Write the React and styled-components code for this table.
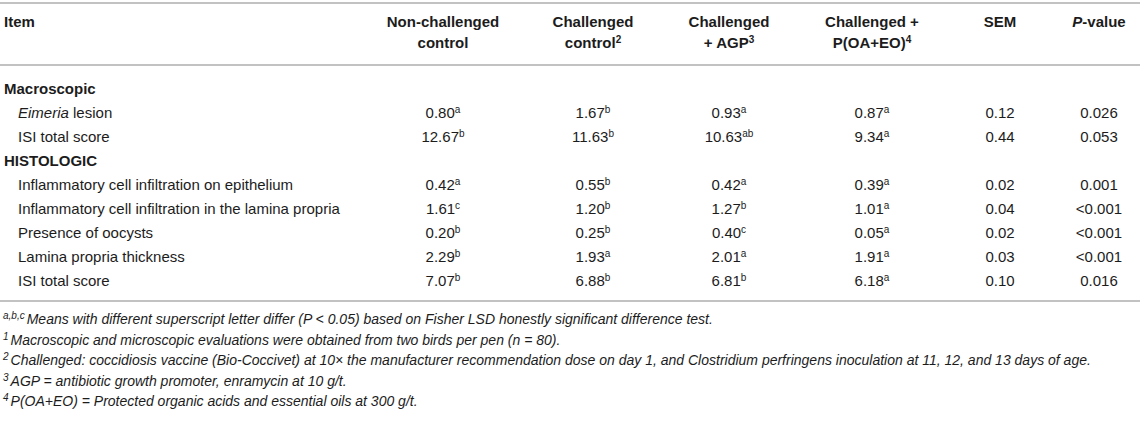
import React from "react";
import styled, { createGlobalStyle } from "styled-components";

const GlobalStyle = createGlobalStyle`
  html, body {
    margin: 0;
    padding: 0;
    background: #ffffff;
  }
  body {
    font-family: "Liberation Sans", Arial, Helvetica, sans-serif;
    color: #1c1c1c;
  }
`;

const Wrapper = styled.div`
  width: 1140px;
  padding-top: 2px;
`;

const Table = styled.table`
  width: 1140px;
  table-layout: fixed;
  border-collapse: collapse;
  font-size: 15px;
`;

const HeadRow = styled.tr`
  border-top: 2px solid #c2c2c2;
  border-bottom: 2px solid #c2c2c2;
`;

const HeadCell = styled.th`
  font-weight: bold;
  line-height: 21px;
  vertical-align: top;
  padding: 7px 4px 11px;
  text-align: ${({ $left }) => ($left ? "left" : "center")};
`;

const Body = styled.tbody`
  border-bottom: 2px solid #c2c2c2;
`;

const Spacer = styled.tr`
  height: ${({ $h }) => $h}px;
`;

const Row = styled.tr`
  height: 24px;
`;

const GroupCell = styled.td`
  font-weight: bold;
  padding: 0 4px;
  line-height: 24px;
`;

const ItemCell = styled.td`
  padding: 0 4px 0 18px;
  line-height: 24px;
  white-space: nowrap;
`;

const ValueCell = styled.td`
  text-align: center;
  padding: 0 4px;
  line-height: 24px;
`;

const Sup = styled.sup`
  font-size: 10px;
  line-height: 0;
  vertical-align: 5px;
`;

const Notes = styled.div`
  padding: 7px 0 0 3px;
  font-size: 14px;
  font-style: italic;
  line-height: 20.5px;
  color: #1c1c1c;
`;

const Note = styled.div`
  white-space: nowrap;
`;

const NoteMark = styled.sup`
  font-size: 10px;
  line-height: 0;
  vertical-align: 5px;
  margin-right: 2px;
`;

const cols = [356, 174, 126, 146, 140, 116, 82];

const groups = [
  {
    title: "Macroscopic",
    rows: [
      {
        label: (
          <>
            <i>Eimeria</i> lesion
          </>
        ),
        vals: [["0.80", "a"], ["1.67", "b"], ["0.93", "a"], ["0.87", "a"]],
        sem: "0.12",
        p: "0.026",
      },
      {
        label: "ISI total score",
        vals: [["12.67", "b"], ["11.63", "b"], ["10.63", "ab"], ["9.34", "a"]],
        sem: "0.44",
        p: "0.053",
      },
    ],
  },
  {
    title: "HISTOLOGIC",
    rows: [
      {
        label: "Inflammatory cell infiltration on epithelium",
        vals: [["0.42", "a"], ["0.55", "b"], ["0.42", "a"], ["0.39", "a"]],
        sem: "0.02",
        p: "0.001",
      },
      {
        label: "Inflammatory cell infiltration in the lamina propria",
        vals: [["1.61", "c"], ["1.20", "b"], ["1.27", "b"], ["1.01", "a"]],
        sem: "0.04",
        p: "<0.001",
      },
      {
        label: "Presence of oocysts",
        vals: [["0.20", "b"], ["0.25", "b"], ["0.40", "c"], ["0.05", "a"]],
        sem: "0.02",
        p: "<0.001",
      },
      {
        label: "Lamina propria thickness",
        vals: [["2.29", "b"], ["1.93", "a"], ["2.01", "a"], ["1.91", "a"]],
        sem: "0.03",
        p: "<0.001",
      },
      {
        label: "ISI total score",
        vals: [["7.07", "b"], ["6.88", "b"], ["6.81", "b"], ["6.18", "a"]],
        sem: "0.10",
        p: "0.016",
      },
    ],
  },
];

const App = () => {
  return (
    <Wrapper>
      <GlobalStyle />
      <Table>
        <colgroup>
          {cols.map((w, i) => (
            <col key={i} style={{ width: w }} />
          ))}
        </colgroup>
        <thead>
          <HeadRow>
            <HeadCell $left>Item</HeadCell>
            <HeadCell>
              Non-challenged
              <br />
              control
            </HeadCell>
            <HeadCell>
              Challenged
              <br />
              control<Sup>2</Sup>
            </HeadCell>
            <HeadCell>
              Challenged
              <br />+ AGP<Sup>3</Sup>
            </HeadCell>
            <HeadCell>
              Challenged +
              <br />
              P(OA+EO)<Sup>4</Sup>
            </HeadCell>
            <HeadCell>SEM</HeadCell>
            <HeadCell>
              <i>P</i>-value
            </HeadCell>
          </HeadRow>
        </thead>
        <Body>
          <Spacer $h={12} />
          {groups.map((g) => (
            <React.Fragment key={g.title}>
              <Row>
                <GroupCell colSpan={7}>{g.title}</GroupCell>
              </Row>
              {g.rows.map((r, i) => (
                <Row key={i}>
                  <ItemCell>{r.label}</ItemCell>
                  {r.vals.map(([v, s], j) => (
                    <ValueCell key={j}>
                      {v}
                      <Sup>{s}</Sup>
                    </ValueCell>
                  ))}
                  <ValueCell>{r.sem}</ValueCell>
                  <ValueCell>{r.p}</ValueCell>
                </Row>
              ))}
            </React.Fragment>
          ))}
          <Spacer $h={8} />
        </Body>
      </Table>
      <Notes>
        <Note>
          <NoteMark>a,b,c</NoteMark>Means with different superscript letter differ (P &lt; 0.05) based on Fisher LSD honestly significant difference test.
        </Note>
        <Note>
          <NoteMark>1</NoteMark>Macroscopic and microscopic evaluations were obtained from two birds per pen (n = 80).
        </Note>
        <Note>
          <NoteMark>2</NoteMark>Challenged: coccidiosis vaccine (Bio-Coccivet) at 10× the manufacturer recommendation dose on day 1, and Clostridium perfringens inoculation at 11, 12, and 13 days of age.
        </Note>
        <Note>
          <NoteMark>3</NoteMark>AGP = antibiotic growth promoter, enramycin at 10 g/t.
        </Note>
        <Note>
          <NoteMark>4</NoteMark>P(OA+EO) = Protected organic acids and essential oils at 300 g/t.
        </Note>
      </Notes>
    </Wrapper>
  );
};

export default App;
